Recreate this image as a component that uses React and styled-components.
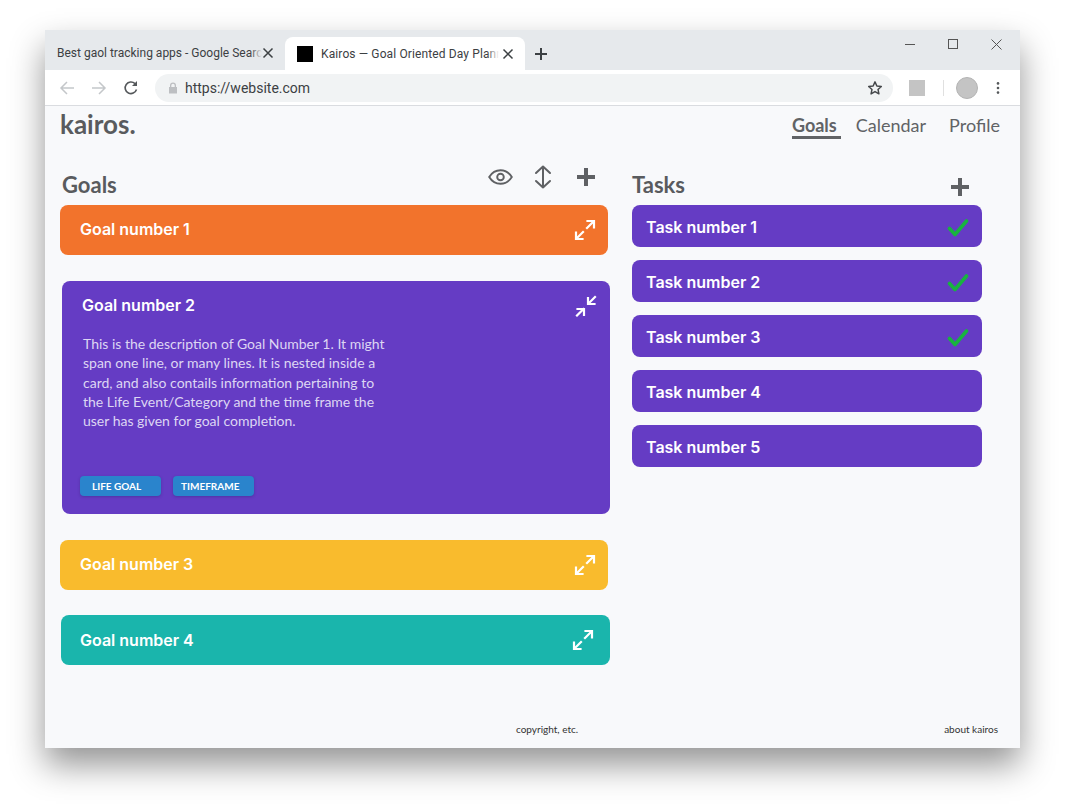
import React from "react";
import styled, { createGlobalStyle } from "styled-components";

const Global = createGlobalStyle`
  html, body { margin: 0; padding: 0; background: #fff; height: 808px; overflow: hidden; }
  * { box-sizing: border-box; }
`;

const Stage = styled.div`
  padding: 30px 45px 0;
`;
const Browser = styled.div`
  width: 975px;
  height: 718px;
  display: flex;
  flex-direction: column;
  background: #f8f9fb;
  box-shadow: 0 17px 32px rgba(0, 0, 0, 0.42);
`;
const TabStrip = styled.div`
  height: 40px;
  flex: none;
  background: #e6e9ec;
  display: flex;
  align-items: flex-end;
`;
const Tab = styled.div`
  width: ${(p) => p.$w}px;
  height: 33px;
  flex: none;
  display: flex;
  align-items: center;
  padding: ${(p) => (p.$active ? "0 11px 0 12px" : "0 11px 2px 12px")};
  border-radius: 8px 8px 0 0;
  background: ${(p) => (p.$active ? "#fff" : "transparent")};
  font: 12px Roboto, sans-serif;
  letter-spacing: ${(p) => (p.$active ? "0.12px" : "0")};
  color: #3c4043;
`;
const TabTitle = styled.span`
  flex: 1;
  min-width: 0;
  white-space: nowrap;
  overflow: hidden;
  position: relative;
  margin-right: ${(p) => (p.$active ? 3 : 0)}px;
  &::after {
    content: "";
    position: absolute;
    right: 0;
    top: 0;
    bottom: 0;
    width: 12px;
    background: linear-gradient(to right, transparent, ${(p) => (p.$active ? "#fff" : "#e6e9ec")});
  }
`;
const Favicon = styled.span`
  width: 16px;
  height: 16px;
  background: #000;
  margin-right: 8px;
  flex: none;
`;
const IconSlot = styled.span`
  display: inline-flex;
  flex: none;
`;
const NewTab = styled.span`
  display: inline-flex;
  margin: 0 0 8px 8px;
`;
const WindowControls = styled.div`
  margin-left: auto;
  align-self: flex-start;
  display: flex;
  gap: 33px;
  padding: 9px 18px 0 0;
`;
const Toolbar = styled.div`
  height: 36px;
  flex: none;
  background: #fff;
  border-bottom: 1px solid #dadce0;
  display: flex;
  align-items: center;
  padding: 0 0 0 14px;
`;
const NavIcons = styled.div`
  display: flex;
  gap: 16px;
  align-items: center;
  width: 96px;
`;
const Omnibox = styled.div`
  width: 738px;
  height: 28px;
  background: #f1f3f4;
  border-radius: 14px;
  display: flex;
  align-items: center;
  padding: 0 10px 0 13px;
  font: 14px Roboto, sans-serif;
  color: #3c4043;
`;
const UrlText = styled.span`
  margin-left: 7px;
  flex: 1;
`;
const ExtSquare = styled.span`
  width: 16px;
  height: 16px;
  background: #c4c4c4;
  margin-left: 16px;
  flex: none;
`;
const ToolbarDivider = styled.span`
  width: 1px;
  height: 16px;
  background: #e0e0e0;
  margin-left: 18px;
  flex: none;
`;
const Avatar = styled.span`
  width: 22px;
  height: 22px;
  border-radius: 50%;
  background: #c4c4c4;
  border: 1px solid #b4b4b4;
  margin-left: 12px;
  flex: none;
`;
const MenuDots = styled.span`
  display: inline-flex;
  margin-left: 18px;
`;
const Page = styled.div`
  flex: 1;
  display: flex;
  flex-direction: column;
  padding: 0 20px 0 15px;
  font-family: Lato, sans-serif;
  min-height: 0;
`;
const Header = styled.header`
  display: flex;
  justify-content: space-between;
  align-items: flex-start;
  height: 54px;
  flex: none;
`;
const Logo = styled.div`
  font: 700 26px/36px Lato, sans-serif;
  color: #595b5e;
`;
const Nav = styled.nav`
  display: flex;
  padding-top: 8px;
`;
const NavLink = styled.a`
  display: block;
  height: 25px;
  margin-right: ${(p) => p.$mr || 0}px;
  padding-right: ${(p) => (p.$active ? 4 : 0)}px;
  font: ${(p) => (p.$active ? 700 : 400)} 18px/23px Lato, sans-serif;
  color: #616366;
  border-bottom: ${(p) => (p.$active ? "3px solid #616366" : "3px solid transparent")};
`;
const Columns = styled.main`
  display: flex;
  flex: 1;
  min-height: 0;
`;
const GoalsColumn = styled.section`
  width: 550px;
  flex: none;
`;
const TasksColumn = styled.section`
  width: 350px;
  margin-left: 22px;
  flex: none;
`;
const SectionHead = styled.div`
  height: 45px;
  display: flex;
  justify-content: space-between;
  align-items: flex-start;
  padding-left: ${(p) => p.$pl || 0}px;
`;
const SectionTitle = styled.h2`
  margin: 11px 0 0;
  font: 700 22px/28px Lato, sans-serif;
  color: #595b5e;
`;
const ActionIcons = styled.div`
  display: flex;
  align-items: center;
  margin-top: ${(p) => p.$mt}px;
  margin-right: ${(p) => p.$mr}px;
`;
const SortSlot = styled.span`
  display: inline-flex;
  margin: 0 24px 0 21px;
`;
const GoalCard = styled.article`
  width: ${(p) => p.$w || 548}px;
  height: ${(p) => p.$h || 50}px;
  margin: 0 0 ${(p) => p.$mb || 0}px ${(p) => p.$ml || 0}px;
  background: ${(p) => p.$color};
  border-radius: 8px;
  color: #fff;
  display: flex;
  flex-direction: column;
`;
const GoalRow = styled.div`
  height: 50px;
  flex: none;
  display: flex;
  align-items: center;
  justify-content: space-between;
  padding: 0 ${(p) => p.$pr || 12}px 0 ${(p) => p.$pl || 20}px;
  font: 600 16px Inter, sans-serif;
`;
const GoalLabel = styled.span`
  padding-bottom: ${(p) => (p.$flush ? 0 : 2)}px;
`;
const GoalBody = styled.p`
  margin: 3px 0 0 21px;
  width: 310px;
  font: 400 14px/19.25px Lato, sans-serif;
  color: #ddd6f3;
`;
const Chips = styled.div`
  display: flex;
  gap: 12px;
  margin: auto 0 18px 18px;
`;
const Chip = styled.span`
  width: 81px;
  height: 20px;
  border-radius: 4px;
  background: #2a84cc;
  box-shadow: 0 1px 3px rgba(30, 30, 90, 0.3);
  padding-left: ${(p) => p.$pl}px;
  font: 700 10px/20px Lato, sans-serif;
  color: #fff;
  text-transform: uppercase;
`;
const TaskList = styled.div`
  display: flex;
  flex-direction: column;
  gap: 13px;
`;
const TaskCard = styled.div`
  height: 42px;
  background: #653cc4;
  border-radius: 8px;
  display: flex;
  align-items: center;
  justify-content: space-between;
  padding: 0 13px 0 14px;
  color: #fff;
  font: 600 16px Inter, sans-serif;
`;
const TaskLabel = styled.span`
  padding-top: 2px;
`;
const CheckSlot = styled.span`
  display: inline-flex;
  padding-top: 4px;
`;
const Footer = styled.footer`
  height: 38px;
  flex: none;
  display: flex;
  font: 400 10px/12px Lato, sans-serif;
  color: #333;
  padding-top: 13px;
`;
const Copyright = styled.span`
  margin-left: 456px;
`;
const About = styled.span`
  margin-left: auto;
  margin-right: 2px;
`;

const Close = ({ size = 12, sw = 1.5, color = "#3c4043" }) => (
  <svg width={size} height={size} viewBox="0 0 12 12" fill="none" stroke={color} strokeWidth={sw}>
    <path d="M1.5 1.5l9 9M10.5 1.5l-9 9" />
  </svg>
);
const Plus = ({ size, sw, color }) => (
  <svg width={size} height={size} viewBox="0 0 20 20" fill="none" stroke={color} strokeWidth={sw}>
    <path d="M10 1v18M1 10h18" />
  </svg>
);
const Expand = () => (
  <svg width="22" height="22" viewBox="0 0 22 22" fill="none" stroke="#fff" strokeWidth="2.2" strokeLinecap="square">
    <path d="M13.5 2h6.5v6.5M19.5 2.5l-6.5 6.5M2 13.5V20h6.5M2.5 19.5L9 13" />
  </svg>
);
const Collapse = () => (
  <svg width="22" height="22" viewBox="0 0 22 22" fill="none" stroke="#fff" strokeWidth="2.2" strokeLinecap="square">
    <path d="M13 3v6h6.5M13.5 8.5L20 2M9 20V14H2.5M8.5 14L2 20.5" />
  </svg>
);
const Check = () => (
  <svg width="22" height="20" viewBox="0 0 22 20" fill="none" stroke="#18b33f" strokeWidth="3.6" strokeLinecap="round" strokeLinejoin="round">
    <path d="M2.5 10.5l5.5 6L19.5 3" />
  </svg>
);
const Eye = () => (
  <svg width="25" height="20" viewBox="0 0 25 20" fill="none" stroke="#5f6164" strokeWidth="1.9">
    <path d="M1.2 10C4 5.4 8 3.2 12.5 3.2S21 5.4 23.8 10C21 14.6 17 16.8 12.5 16.8S4 14.6 1.2 10z" />
    <circle cx="12.5" cy="10" r="3.3" />
  </svg>
);
const Sort = () => (
  <svg width="18" height="24" viewBox="0 0 18 24" fill="none" stroke="#5f6164" strokeWidth="2" strokeLinecap="round" strokeLinejoin="round">
    <path d="M9 1.5v21M2 8l7-6.5L16 8M2 16l7 6.5 7-6.5" />
  </svg>
);

const Tasks = [1, 2, 3, 4, 5];

export default function App() {
  return (
    <>
      <Global />
      <Stage>
        <Browser>
          <TabStrip>
            <Tab $w={240}>
              <TabTitle>Best gaol tracking apps - Google Search</TabTitle>
              <IconSlot><Close /></IconSlot>
            </Tab>
            <Tab $w={240} $active>
              <Favicon />
              <TabTitle $active>Kairos — Goal Oriented Day Planner</TabTitle>
              <IconSlot><Close /></IconSlot>
            </Tab>
            <NewTab>
              <svg width="16" height="16" viewBox="0 0 16 16" fill="none" stroke="#3c4043" strokeWidth="2">
                <path d="M8 2v12M2 8h12" />
              </svg>
            </NewTab>
            <WindowControls>
              <svg width="10" height="10" viewBox="0 0 10 10" fill="none" stroke="#555" strokeWidth="1"><path d="M0 5.5h10" /></svg>
              <svg width="10" height="10" viewBox="0 0 10 10" fill="none" stroke="#555" strokeWidth="1"><rect x=".5" y=".5" width="9" height="9" /></svg>
              <svg width="11" height="11" viewBox="0 0 11 11" fill="none" stroke="#555" strokeWidth="1"><path d="M.5.5l10 10M10.5.5l-10 10" /></svg>
            </WindowControls>
          </TabStrip>
          <Toolbar>
            <NavIcons>
              <svg width="16" height="16" viewBox="0 0 16 16" fill="none" stroke="#c4c7ca" strokeWidth="1.5"><path d="M15 8H2M8 2L2 8l6 6" /></svg>
              <svg width="16" height="16" viewBox="0 0 16 16" fill="none" stroke="#c4c7ca" strokeWidth="1.5"><path d="M1 8h13M8 2l6 6-6 6" /></svg>
              <svg width="16" height="16" viewBox="0 0 16 16" fill="none" stroke="#55585b" strokeWidth="1.6"><path d="M13.5 9.5A5.8 5.8 0 1 1 12 3.6" /><path d="M14 1v5H9" fill="#55585b" stroke="none" /></svg>
            </NavIcons>
            <Omnibox>
              <svg width="10" height="12" viewBox="0 0 10 12" fill="#bdbfc2"><path d="M2 5V3.5a3 3 0 0 1 6 0V5h1v6.5H1V5zm1.3 0h3.4V3.5a1.7 1.7 0 0 0-3.4 0z" /></svg>
              <UrlText>https://website.com</UrlText>
              <svg width="16" height="16" viewBox="0 0 24 24" fill="none" stroke="#44474a" strokeWidth="2.2" strokeLinejoin="round"><path d="M12 2.8l2.8 6.2 6.7.7-5 4.5 1.4 6.6-5.9-3.4-5.9 3.4 1.4-6.6-5-4.5 6.7-.7z" /></svg>
            </Omnibox>
            <ExtSquare />
            <ToolbarDivider />
            <Avatar />
            <MenuDots>
              <svg width="4" height="14" viewBox="0 0 4 14" fill="#55585b"><circle cx="2" cy="2.4" r="1.3" /><circle cx="2" cy="7" r="1.3" /><circle cx="2" cy="11.6" r="1.3" /></svg>
            </MenuDots>
          </Toolbar>
          <Page>
            <Header>
              <Logo>kairos.</Logo>
              <Nav>
                <NavLink $active $mr={15}>Goals</NavLink>
                <NavLink $mr={23}>Calendar</NavLink>
                <NavLink>Profile</NavLink>
              </Nav>
            </Header>
            <Columns>
              <GoalsColumn>
                <SectionHead $pl={2}>
                  <SectionTitle>Goals</SectionTitle>
                  <ActionIcons $mt={5} $mr={14}>
                    <Eye />
                    <SortSlot><Sort /></SortSlot>
                    <Plus size={20} sw={4} color="#5f6164" />
                  </ActionIcons>
                </SectionHead>
                <GoalCard $color="#f2732c" $mb={26}>
                  <GoalRow><GoalLabel>Goal number 1</GoalLabel><Expand /></GoalRow>
                </GoalCard>
                <GoalCard $color="#653cc4" $ml={2} $h={233} $mb={26}>
                  <GoalRow $pr={13}><GoalLabel>Goal number 2</GoalLabel><Collapse /></GoalRow>
                  <GoalBody>
                    This is the description of Goal Number 1. It might span one line, or many lines. It is nested inside a card, and also contails information pertaining to the Life Event/Category and the time frame the user has given for goal completion.
                  </GoalBody>
                  <Chips>
                    <Chip $pl={12}>Life Goal</Chip>
                    <Chip $pl={8}>Timeframe</Chip>
                  </Chips>
                </GoalCard>
                <GoalCard $color="#f9bb2d" $mb={25}>
                  <GoalRow><GoalLabel>Goal number 3</GoalLabel><Expand /></GoalRow>
                </GoalCard>
                <GoalCard $color="#1ab5ac" $ml={1} $w={549}>
                  <GoalRow $pr={16} $pl={19}><GoalLabel $flush>Goal number 4</GoalLabel><Expand /></GoalRow>
                </GoalCard>
              </GoalsColumn>
              <TasksColumn>
                <SectionHead>
                  <SectionTitle>Tasks</SectionTitle>
                  <ActionIcons $mt={17} $mr={12}>
                    <Plus size={20} sw={4} color="#5f6164" />
                  </ActionIcons>
                </SectionHead>
                <TaskList>
                  {Tasks.map((n) => (
                    <TaskCard key={n}>
                      <TaskLabel>Task number {n}</TaskLabel>
                      {n <= 3 && <CheckSlot><Check /></CheckSlot>}
                    </TaskCard>
                  ))}
                </TaskList>
              </TasksColumn>
            </Columns>
            <Footer>
              <Copyright>copyright, etc.</Copyright>
              <About>about kairos</About>
            </Footer>
          </Page>
        </Browser>
      </Stage>
    </>
  );
}
